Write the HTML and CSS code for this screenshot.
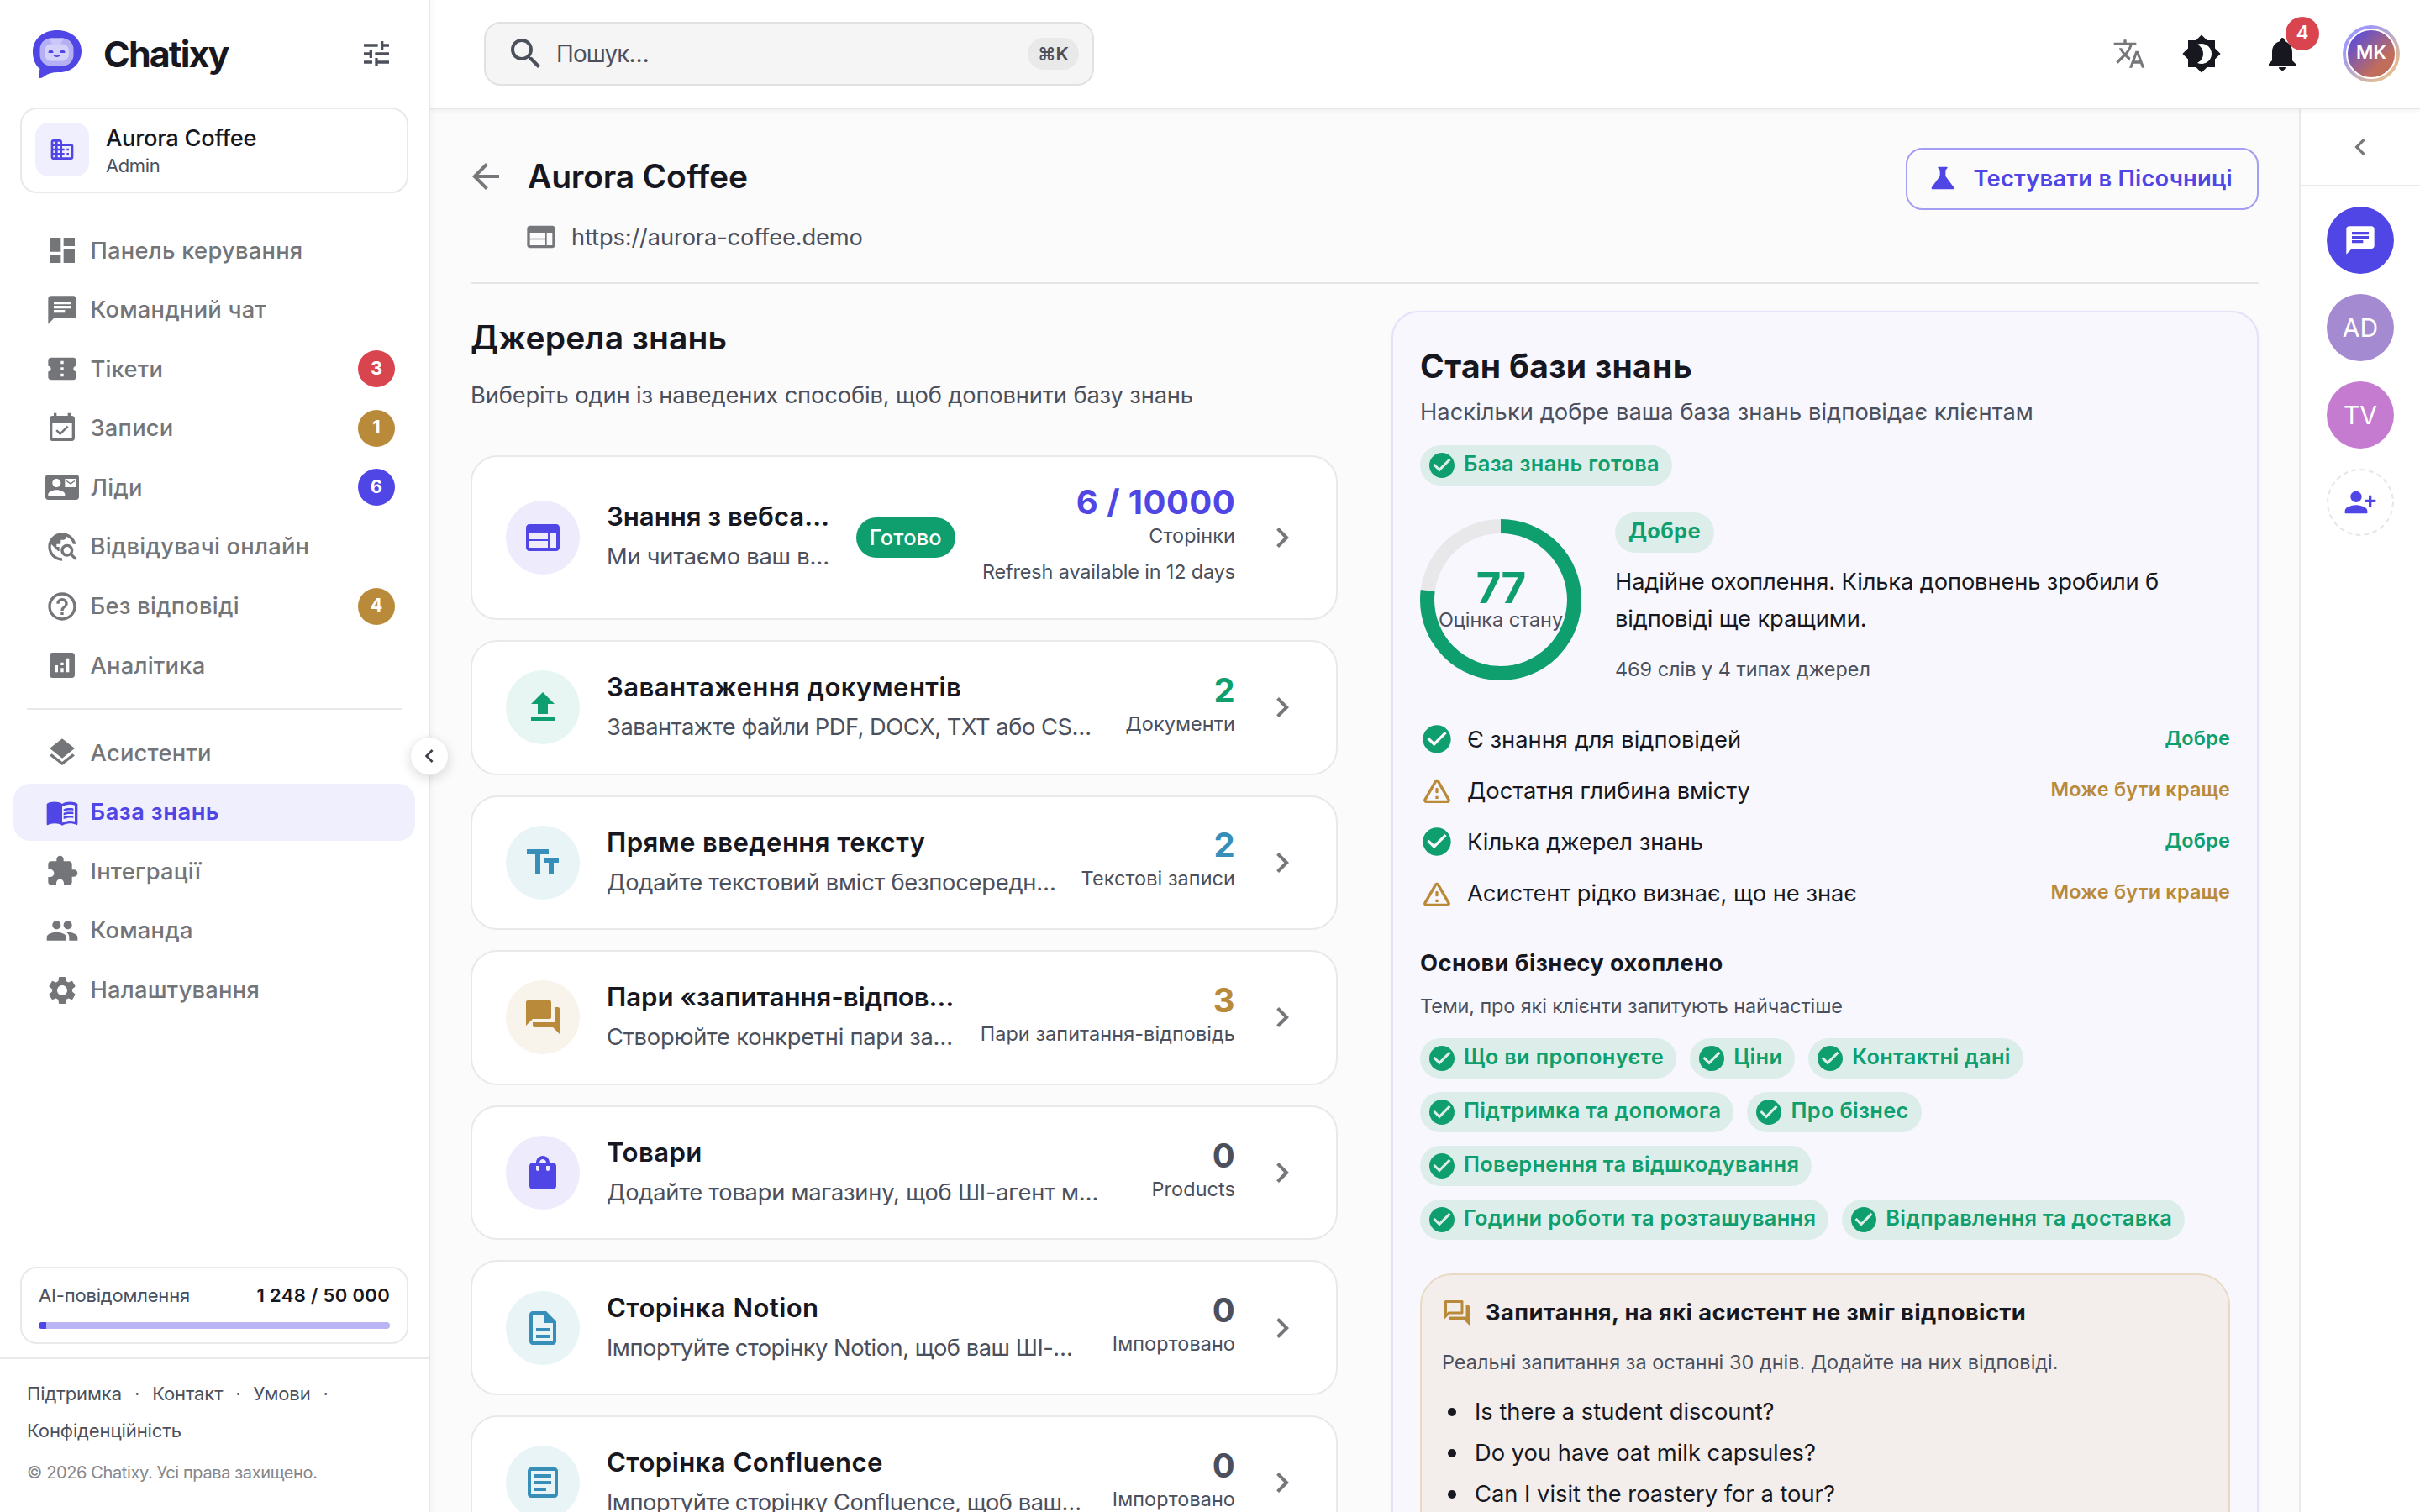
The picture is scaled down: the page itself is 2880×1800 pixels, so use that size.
FILE: index.html
```html
<!DOCTYPE html>
<html lang="uk">
<head>
    <meta charset="UTF-8">
    <title>Chatixy - База знань</title>
    <link rel="stylesheet" href="styles.css">
</head>
<body>

<!-- icon sprite -->
<svg class="sprite" xmlns="http://www.w3.org/2000/svg">
    <symbol id="i-tune" viewBox="0 0 24 24"><path d="M3 17v2h6v-2H3zM3 5v2h10V5H3zm10 16v-2h8v-2h-8v-2h-2v6h2zM7 9v2H3v2h4v2h2V9H7zm14 4v-2H11v2h10zm-6-4h2V7h4V5h-4V3h-2v6z"/></symbol>
    <symbol id="i-business" viewBox="0 0 24 24"><path d="M12 7V5c0-1.1-.9-2-2-2H4c-1.1 0-2 .9-2 2v14c0 1.1.9 2 2 2h16c1.1 0 2-.9 2-2V9c0-1.1-.9-2-2-2h-8zM6 19H4v-2h2v2zm0-4H4v-2h2v2zm0-4H4V9h2v2zm0-4H4V5h2v2zm4 12H8v-2h2v2zm0-4H8v-2h2v2zm0-4H8V9h2v2zm0-4H8V5h2v2zm10 12h-8v-2h2v-2h-2v-2h2v-2h-2V9h8v10zm-2-8h-2v2h2v-2zm0 4h-2v2h2v-2z"/></symbol>
    <symbol id="i-dashboard" viewBox="0 0 24 24"><path d="M3 13h8V3H3v10zm0 8h8v-6H3v6zm10 0h8V11h-8v10zm0-18v6h8V3h-8z"/></symbol>
    <symbol id="i-chat" viewBox="0 0 24 24"><path d="M20 2H4c-1.1 0-1.99.9-1.99 2L2 22l4-4h14c1.1 0 2-.9 2-2V4c0-1.1-.9-2-2-2zM6 9h12v2H6V9zm8 5H6v-2h8v2zm4-6H6V6h12v2z"/></symbol>
    <symbol id="i-ticket" viewBox="0 0 24 24"><path d="M22 10V6c0-1.11-.9-2-2-2H4c-1.1 0-1.99.89-1.99 2v4c1.1 0 1.99.9 1.99 2s-.89 2-2 2v4c0 1.1.9 2 2 2h16c1.1 0 2-.9 2-2v-4c-1.1 0-2-.9-2-2s.9-2 2-2zm-9 7.5h-2v-2h2v2zm0-4.5h-2v-2h2v2zm0-4.5h-2v-2h2v2z"/></symbol>
    <symbol id="i-event" viewBox="0 0 24 24"><path d="M16.53 11.06L15.47 10l-4.88 4.88-2.12-2.12-1.06 1.06L10.59 17l5.94-5.94zM19 3h-1V1h-2v2H8V1H6v2H5c-1.11 0-1.99.9-1.99 2L3 19c0 1.1.89 2 2 2h14c1.1 0 2-.9 2-2V5c0-1.1-.9-2-2-2zm0 16H5V8h14v11z"/></symbol>
    <symbol id="i-contact" viewBox="0 0 24 24"><path d="M21 8V7l-3 2-3-2v1l3 2 3-2zm1-5H2C.9 3 0 3.9 0 5v14c0 1.1.9 2 2 2h20c1.1 0 1.99-.9 1.99-2L24 5c0-1.1-.9-2-2-2zM8 6c1.66 0 3 1.34 3 3s-1.34 3-3 3-3-1.34-3-3 1.34-3 3-3zm6 12H2v-1c0-2 4-3.1 6-3.1s6 1.1 6 3.1v1zm8-6h-8V6h8v6z"/></symbol>
    <symbol id="i-explore" viewBox="0 0 24 24"><path d="M19.3 16.9c.4-.7.7-1.5.7-2.4 0-2.5-2-4.5-4.5-4.5S11 12 11 14.5s2 4.5 4.5 4.5c.9 0 1.7-.3 2.4-.7l3.2 3.2 1.4-1.4-3.2-3.2zm-3.8.1c-1.4 0-2.5-1.1-2.5-2.5s1.1-2.5 2.5-2.5 2.5 1.1 2.5 2.5-1.1 2.5-2.5 2.5zM12 20v2C6.48 22 2 17.52 2 12S6.48 2 12 2c4.84 0 8.87 3.44 9.8 8h-2.07c-.64-2.46-2.4-4.47-4.73-5.41V5c0 1.1-.9 2-2 2h-2v2c0 .55-.45 1-1 1H8v2h2v3H9l-4.79-4.79C4.08 10.79 4 11.38 4 12c0 4.41 3.59 8 8 8z"/></symbol>
    <symbol id="i-help" viewBox="0 0 24 24"><path d="M11 18h2v-2h-2v2zm1-16C6.48 2 2 6.48 2 12s4.48 10 10 10 10-4.48 10-10S17.52 2 12 2zm0 18c-4.41 0-8-3.59-8-8s3.59-8 8-8 8 3.59 8 8-3.59 8-8 8zm0-14c-2.21 0-4 1.79-4 4h2c0-1.1.9-2 2-2s2 .9 2 2c0 2-3 1.75-3 5h2c0-2.25 3-2.5 3-5 0-2.21-1.79-4-4-4z"/></symbol>
    <symbol id="i-analytics" viewBox="0 0 24 24"><path d="M19 3H5c-1.1 0-2 .9-2 2v14c0 1.1.9 2 2 2h14c1.1 0 2-.9 2-2V5c0-1.1-.9-2-2-2zM9 17H7v-5h2v5zm4 0h-2v-3h2v3zm0-5h-2v-2h2v2zm4 5h-2V7h2v10z"/></symbol>
    <symbol id="i-layers" viewBox="0 0 24 24"><path d="M11.99 18.54l-7.37-5.73L3 14.07l9 7 9-7-1.63-1.27-7.38 5.74zM12 16l7.36-5.73L21 9l-9-7-9 7 1.63 1.27L12 16z"/></symbol>
    <symbol id="i-book" viewBox="0 0 24 24"><path d="M21 5c-1.11-.35-2.33-.5-3.5-.5-1.95 0-4.05.4-5.5 1.5-1.45-1.1-3.55-1.5-5.5-1.5S2.45 4.9 1 6v14.65c0 .25.25.5.5.5.1 0 .15-.05.25-.05C3.1 20.45 5.05 20 6.5 20c1.95 0 4.05.4 5.5 1.5 1.35-.85 3.8-1.5 5.5-1.5 1.65 0 3.35.3 4.75 1.05.1.05.15.05.25.05.25 0 .5-.25.5-.5V6c-.6-.45-1.25-.75-2-1zm0 13.5c-1.1-.35-2.3-.5-3.5-.5-1.7 0-4.15.65-5.5 1.5V8c1.35-.85 3.8-1.5 5.5-1.5 1.2 0 2.4.15 3.5.5v11.5z"/><path d="M17.5 10.5c.88 0 1.73.09 2.5.26V9.24c-.79-.15-1.64-.24-2.5-.24-1.7 0-3.24.29-4.5.83v1.66c1.13-.64 2.7-.99 4.5-.99zM13 12.49v1.66c1.13-.64 2.7-.99 4.5-.99.88 0 1.73.09 2.5.26V11.9c-.79-.15-1.64-.24-2.5-.24-1.7 0-3.24.3-4.5.83zm4.5 1.84c-1.7 0-3.24.29-4.5.83v1.66c1.13-.64 2.7-.99 4.5-.99.88 0 1.73.09 2.5.26v-1.52c-.79-.16-1.64-.24-2.5-.24z"/></symbol>
    <symbol id="i-extension" viewBox="0 0 24 24"><path d="M20.5 11H19V7c0-1.1-.9-2-2-2h-4V3.5C13 2.12 11.88 1 10.5 1S8 2.12 8 3.5V5H4c-1.1 0-1.99.9-1.99 2v3.8H3.5c1.49 0 2.7 1.21 2.7 2.7s-1.21 2.7-2.7 2.7H2V20c0 1.1.9 2 2 2h3.8v-1.5c0-1.49 1.21-2.7 2.7-2.7 1.49 0 2.7 1.21 2.7 2.7V22H17c1.1 0 2-.9 2-2v-4h1.5c1.38 0 2.5-1.12 2.5-2.5S21.88 11 20.5 11z"/></symbol>
    <symbol id="i-people" viewBox="0 0 24 24"><path d="M16 11c1.66 0 2.99-1.34 2.99-3S17.66 5 16 5c-1.66 0-3 1.34-3 3s1.34 3 3 3zm-8 0c1.66 0 2.99-1.34 2.99-3S9.66 5 8 5C6.34 5 5 6.34 5 8s1.34 3 3 3zm0 2c-2.33 0-7 1.17-7 3.5V19h14v-2.5c0-2.33-4.67-3.5-7-3.5zm8 0c-.29 0-.62.02-.97.05 1.16.84 1.97 1.97 1.97 3.45V19h6v-2.5c0-2.33-4.67-3.5-7-3.5z"/></symbol>
    <symbol id="i-settings" viewBox="0 0 24 24"><path d="M19.14 12.94c.04-.3.06-.61.06-.94 0-.32-.02-.64-.07-.94l2.03-1.58c.18-.14.23-.41.12-.61l-1.92-3.32c-.12-.22-.37-.29-.59-.22l-2.39.96c-.5-.38-1.03-.7-1.62-.94l-.36-2.54c-.04-.24-.24-.41-.48-.41h-3.84c-.24 0-.43.17-.47.41l-.36 2.54c-.59.24-1.13.57-1.62.94l-2.39-.96c-.22-.08-.47 0-.59.22L2.74 8.87c-.12.21-.08.47.12.61l2.03 1.58c-.05.3-.09.63-.09.94s.02.64.07.94l-2.03 1.58c-.18.14-.23.41-.12.61l1.92 3.32c.12.22.37.29.59.22l2.39-.96c.5.38 1.03.7 1.62.94l.36 2.54c.05.24.24.41.48.41h3.84c.24 0 .44-.17.47-.41l.36-2.54c.59-.24 1.13-.56 1.62-.94l2.39.96c.22.08.47 0 .59-.22l1.92-3.32c.12-.22.07-.47-.12-.61l-2.01-1.58zM12 15.6c-1.98 0-3.6-1.62-3.6-3.6s1.62-3.6 3.6-3.6 3.6 1.62 3.6 3.6-1.62 3.6-3.6 3.6z"/></symbol>
    <symbol id="i-left" viewBox="0 0 24 24"><path d="M15.41 7.41L14 6l-6 6 6 6 1.41-1.41L10.83 12z"/></symbol>
    <symbol id="i-right" viewBox="0 0 24 24"><path d="M10 6L8.59 7.41 13.17 12l-4.58 4.59L10 18l6-6z"/></symbol>
    <symbol id="i-search" viewBox="0 0 24 24"><path d="M15.5 14h-.79l-.28-.27C15.41 12.59 16 11.11 16 9.5 16 5.91 13.09 3 9.5 3S3 5.91 3 9.5 5.91 16 9.5 16c1.61 0 3.09-.59 4.23-1.57l.27.28v.79l5 4.99L20.49 19l-4.99-5zm-6 0C7.01 14 5 11.99 5 9.5S7.01 5 9.5 5 14 7.01 14 9.5 11.99 14 9.5 14z"/></symbol>
    <symbol id="i-translate" viewBox="0 0 24 24"><path d="M12.87 15.07l-2.54-2.51.03-.03c1.74-1.94 2.98-4.17 3.71-6.53H17V4h-7V2H8v2H1v1.99h11.17C11.5 7.92 10.44 9.75 9 11.35 8.07 10.32 7.3 9.19 6.69 8h-2c.73 1.63 1.73 3.17 2.98 4.56l-5.09 5.02L4 19l5-5 3.11 3.11.76-2.04zM18.5 10h-2L12 22h2l1.12-3h4.75L21 22h2l-4.5-12zm-2.62 7l1.62-4.33L19.12 17h-3.24z"/></symbol>
    <symbol id="i-brightness" viewBox="0 0 24 24"><path d="M20 8.69V4h-4.69L12 .69 8.69 4H4v4.69L.69 12 4 15.31V20h4.69L12 23.31 15.31 20H20v-4.69L23.31 12 20 8.69zM12 18c-.89 0-1.74-.2-2.5-.55C11.56 16.5 13 14.42 13 12s-1.44-4.5-3.5-5.45C10.26 6.2 11.11 6 12 6c3.31 0 6 2.69 6 6s-2.69 6-6 6z"/></symbol>
    <symbol id="i-bell" viewBox="0 0 24 24"><path d="M12 22c1.1 0 2-.9 2-2h-4c0 1.1.89 2 2 2zm6-6v-5c0-3.07-1.64-5.64-4.5-6.32V4c0-.83-.67-1.5-1.5-1.5s-1.5.67-1.5 1.5v.68C7.63 5.36 6 7.92 6 11v5l-2 2v1h16v-1l-2-2z"/></symbol>
    <symbol id="i-back" viewBox="0 0 24 24"><path d="M20 11H7.83l5.59-5.59L12 4l-8 8 8 8 1.41-1.41L7.83 13H20v-2z"/></symbol>
    <symbol id="i-web" viewBox="0 0 24 24"><path d="M20 4H4c-1.1 0-1.99.9-1.99 2L2 18c0 1.1.9 2 2 2h16c1.1 0 2-.9 2-2V6c0-1.1-.9-2-2-2zm-5 14H4v-4h11v4zm0-5H4V9h11v4zm5 5h-4V9h4v9z"/></symbol>
    <symbol id="i-science" viewBox="0 0 24 24"><path d="M19.8 18.4L14 10.67V6.5l1.35-1.69c.26-.33.03-.81-.39-.81H9.04c-.42 0-.65.48-.39.81L10 6.5v4.17L4.2 18.4c-.49.66-.02 1.6.8 1.6h14c.82 0 1.29-.94.8-1.6z"/></symbol>
    <symbol id="i-upload" viewBox="0 0 24 24"><path d="M5 20h14v-2H5v2zm0-10h4v6h6v-6h4l-7-7-7 7z"/></symbol>
    <symbol id="i-text" viewBox="0 0 24 24"><path d="M2.5 4v3h5v12h3V7h5V4h-13zm19 5h-9v3h3v7h3v-7h3V9z"/></symbol>
    <symbol id="i-forum" viewBox="0 0 24 24"><path d="M21 6h-2v9H6v2c0 .55.45 1 1 1h11l4 4V7c0-.55-.45-1-1-1zm-4 6V3c0-.55-.45-1-1-1H3c-.55 0-1 .45-1 1v14l4-4h10c.55 0 1-.45 1-1z"/></symbol>
    <symbol id="i-forum-outline" viewBox="0 0 24 24"><path d="M15 4v7H5.17L4 12.17V4h11m1-2H3c-.55 0-1 .45-1 1v14l4-4h10c.55 0 1-.45 1-1V3c0-.55-.45-1-1-1zm5 4h-2v9H6v2c0 .55.45 1 1 1h11l4 4V7c0-.55-.45-1-1-1z"/></symbol>
    <symbol id="i-bag" viewBox="0 0 24 24"><path d="M18 6h-2c0-2.21-1.79-4-4-4S8 3.79 8 6H6c-1.1 0-2 .9-2 2v12c0 1.1.9 2 2 2h12c1.1 0 2-.9 2-2V8c0-1.1-.9-2-2-2zm-8 4c0 .55-.45 1-1 1s-1-.45-1-1V8h2v2zm2-6c1.1 0 2 .9 2 2h-4c0-1.1.9-2 2-2zm4 6c0 .55-.45 1-1 1s-1-.45-1-1V8h2v2z"/></symbol>
    <symbol id="i-doc" viewBox="0 0 24 24"><path d="M8 16h8v2H8zm0-4h8v2H8zm6-10H6c-1.1 0-2 .9-2 2v16c0 1.1.89 2 1.99 2H18c1.1 0 2-.9 2-2V8l-6-6zm4 18H6V4h7v5h5v11z"/></symbol>
    <symbol id="i-article" viewBox="0 0 24 24"><path d="M19 5v14H5V5h14m0-2H5c-1.1 0-2 .9-2 2v14c0 1.1.9 2 2 2h14c1.1 0 2-.9 2-2V5c0-1.1-.9-2-2-2z"/><path d="M14 17H7v-2h7v2zm3-4H7v-2h10v2zm0-4H7V7h10v2z"/></symbol>
    <symbol id="i-check" viewBox="0 0 24 24"><path d="M12 2C6.48 2 2 6.48 2 12s4.48 10 10 10 10-4.48 10-10S17.52 2 12 2zm-2 15l-5-5 1.41-1.41L10 14.17l7.59-7.59L19 8l-9 9z"/></symbol>
    <symbol id="i-warning" viewBox="0 0 24 24"><path d="M12 5.99L19.53 19H4.47L12 5.99M2.74 18c-.77 1.33.19 3 1.73 3h15.06c1.54 0 2.5-1.67 1.73-3L13.73 4.99c-.77-1.33-2.69-1.33-3.46 0L2.74 18zM11 11v2c0 .55.45 1 1 1s1-.45 1-1v-2c0-.55-.45-1-1-1s-1 .45-1 1zm0 5h2v2h-2z"/></symbol>
    <symbol id="i-person-add" viewBox="0 0 24 24"><path d="M13 8c0-2.21-1.79-4-4-4S5 5.79 5 8s1.79 4 4 4 4-1.79 4-4zm2 2v2h3v3h2v-3h3v-2h-3V7h-2v3h-3zM1 18v2h16v-2c0-2.66-5.33-4-8-4s-8 1.34-8 4z"/></symbol>
</svg>

<div class="app">
    <aside class="sidebar">
        <div class="brand">
            <svg class="logo" viewBox="0 0 64 64">
                <path fill="#4f46e5" d="M33 4C49 4 62 14 62 28.500C62 44 50 54 36 54C30 54 24 54.500 19 58C16 60 14 61.500 12.500 61C10 60 10.800 57 12.500 50C7 46 4 38 4 29.500C4 14 17 4 33 4z"/>
                <rect fill="#b5b0f4" x="12.500" y="13.500" width="40" height="33" rx="13"/>
                <path fill="#cbc7f8" d="M24 13.500h17l-4 7H27z"/>
                <rect fill="#d5d2fa" x="18" y="20.500" width="29" height="20" rx="8"/>
                <path fill="#4f46e5" d="M22.500 31a3 3.500 0 0 1 6 0zM36.500 31a3 3.500 0 0 1 6 0z"/>
                <path fill="none" stroke="#4f46e5" stroke-width="1.600" stroke-linecap="round" d="M29.500 34q3 2.200 6 0"/>
            </svg>
            <span class="brand-name">Chatixy</span>
            <svg class="icon icon-40"><use href="#i-tune"/></svg>
        </div>

        <div class="org">
            <div class="org-icon"><svg class="icon icon-32"><use href="#i-business"/></svg></div>
            <div>
                <div class="org-name">Aurora Coffee</div>
                <div class="org-role">Admin</div>
            </div>
        </div>

        <nav class="nav">
            <a class="nav-item"><svg class="icon icon-40"><use href="#i-dashboard"/></svg><span>Панель керування</span></a>
            <a class="nav-item"><svg class="icon icon-40"><use href="#i-chat"/></svg><span>Командний чат</span></a>
            <a class="nav-item"><svg class="icon icon-40"><use href="#i-ticket"/></svg><span>Тікети</span><b class="badge red">3</b></a>
            <a class="nav-item"><svg class="icon icon-40"><use href="#i-event"/></svg><span>Записи</span><b class="badge amber">1</b></a>
            <a class="nav-item"><svg class="icon icon-40"><use href="#i-contact"/></svg><span>Ліди</span><b class="badge violet">6</b></a>
            <a class="nav-item"><svg class="icon icon-40"><use href="#i-explore"/></svg><span>Відвідувачі онлайн</span></a>
            <a class="nav-item"><svg class="icon icon-40"><use href="#i-help"/></svg><span>Без відповіді</span><b class="badge amber">4</b></a>
            <a class="nav-item"><svg class="icon icon-40"><use href="#i-analytics"/></svg><span>Аналітика</span></a>
            <hr class="nav-line">
            <a class="nav-item"><svg class="icon icon-40"><use href="#i-layers"/></svg><span>Асистенти</span></a>
            <a class="nav-item active"><svg class="icon icon-40"><use href="#i-book"/></svg><span>База знань</span></a>
            <a class="nav-item"><svg class="icon icon-40"><use href="#i-extension"/></svg><span>Інтеграції</span></a>
            <a class="nav-item"><svg class="icon icon-40"><use href="#i-people"/></svg><span>Команда</span></a>
            <a class="nav-item"><svg class="icon icon-40"><use href="#i-settings"/></svg><span>Налаштування</span></a>
        </nav>

        <div class="usage">
            <div class="usage-row"><span>AI-повідомлення</span><b>1 248 / 50 000</b></div>
            <div class="bar"><div class="bar-fill" style="width: 2.1%"></div></div>
        </div>

        <footer class="footer">
            <div class="links">
                <a>Підтримка</a><i>·</i><a>Контакт</a><i>·</i><a>Умови</a><i>·</i><a>Конфіденційність</a>
            </div>
            <div class="copy">© 2026 Chatixy. Усі права захищено.</div>
        </footer>

        <button class="collapse"><svg class="icon icon-32"><use href="#i-left"/></svg></button>
    </aside>

    <div class="main">
        <header class="topbar">
            <div class="search">
                <svg class="icon icon-48"><use href="#i-search"/></svg>
                <span class="search-text">Пошук…</span>
                <span class="kbd">⌘K</span>
            </div>
            <div class="tools">
                <svg class="icon icon-40 muted"><use href="#i-translate"/></svg>
                <svg class="icon icon-48"><use href="#i-brightness"/></svg>
                <div class="bell">
                    <svg class="icon icon-48"><use href="#i-bell"/></svg>
                    <b class="bell-count">4</b>
                </div>
                <div class="avatar"><span>MK</span></div>
            </div>
        </header>

        <div class="body">
            <main class="content">
                <div class="page-head">
                    <div class="page-info">
                        <div class="page-title"><svg class="icon icon-48 muted"><use href="#i-back"/></svg><h1>Aurora Coffee</h1></div>
                        <div class="page-url"><svg class="icon icon-40 muted"><use href="#i-web"/></svg><span>https://aurora-coffee.demo</span></div>
                    </div>
                    <button class="sandbox"><svg class="icon icon-40"><use href="#i-science"/></svg><span>Тестувати в Пісочниці</span></button>
                </div>

                <div class="columns">
                    <section class="sources">
                        <h2>Джерела знань</h2>
                        <p class="lead">Виберіть один із наведених способів, щоб доповнити базу знань</p>

                        <div class="cards">
                            <div class="card tall">
                                <div class="card-icon violet"><svg class="icon icon-48"><use href="#i-web"/></svg></div>
                                <div class="card-text"><h3 class="tight">Знання з вебса…</h3><p>Ми читаємо ваш в…</p></div>
                                <span class="ready">Готово</span>
                                <div class="card-count violet"><b>6 / 10000</b><span>Сторінки</span><span class="refresh">Refresh available in 12 days</span></div>
                                <svg class="icon icon-48 muted"><use href="#i-right"/></svg>
                            </div>
                            <div class="card">
                                <div class="card-icon green"><svg class="icon icon-48"><use href="#i-upload"/></svg></div>
                                <div class="card-text"><h3>Завантаження документів</h3><p class="tight">Завантажте файли PDF, DOCX, TXT або CS…</p></div>
                                <div class="card-count green"><b>2</b><span>Документи</span></div>
                                <svg class="icon icon-48 muted"><use href="#i-right"/></svg>
                            </div>
                            <div class="card">
                                <div class="card-icon blue"><svg class="icon icon-48"><use href="#i-text"/></svg></div>
                                <div class="card-text"><h3>Пряме введення тексту</h3><p>Додайте текстовий вміст безпосередн…</p></div>
                                <div class="card-count blue"><b>2</b><span>Текстові записи</span></div>
                                <svg class="icon icon-48 muted"><use href="#i-right"/></svg>
                            </div>
                            <div class="card">
                                <div class="card-icon amber"><svg class="icon icon-48"><use href="#i-forum"/></svg></div>
                                <div class="card-text"><h3 class="tight">Пари «запитання-відпов…</h3><p>Створюйте конкретні пари за…</p></div>
                                <div class="card-count amber"><b>3</b><span>Пари запитання-відповідь</span></div>
                                <svg class="icon icon-48 muted"><use href="#i-right"/></svg>
                            </div>
                            <div class="card">
                                <div class="card-icon violet"><svg class="icon icon-48"><use href="#i-bag"/></svg></div>
                                <div class="card-text"><h3>Товари</h3><p>Додайте товари магазину, щоб ШІ-агент м…</p></div>
                                <div class="card-count"><b>0</b><span>Products</span></div>
                                <svg class="icon icon-48 muted"><use href="#i-right"/></svg>
                            </div>
                            <div class="card">
                                <div class="card-icon blue"><svg class="icon icon-48"><use href="#i-doc"/></svg></div>
                                <div class="card-text"><h3>Сторінка Notion</h3><p class="tight">Імпортуйте сторінку Notion, щоб ваш ШІ-…</p></div>
                                <div class="card-count"><b>0</b><span>Імпортовано</span></div>
                                <svg class="icon icon-48 muted"><use href="#i-right"/></svg>
                            </div>
                            <div class="card">
                                <div class="card-icon blue"><svg class="icon icon-48"><use href="#i-article"/></svg></div>
                                <div class="card-text"><h3>Сторінка Confluence</h3><p class="tight">Імпортуйте сторінку Confluence, щоб ваш…</p></div>
                                <div class="card-count"><b>0</b><span>Імпортовано</span></div>
                                <svg class="icon icon-48 muted"><use href="#i-right"/></svg>
                            </div>
                        </div>
                    </section>

                    <section class="health">
                        <h2>Стан бази знань</h2>
                        <p class="health-sub">Наскільки добре ваша база знань відповідає клієнтам</p>
                        <span class="chip"><svg class="icon icon-36"><use href="#i-check"/></svg><span>База знань готова</span></span>

                        <div class="score">
                            <div class="gauge">
                                <svg viewBox="0 0 192 192">
                                    <circle class="gauge-track" cx="96" cy="96" r="87.500"/>
                                    <circle class="gauge-value" cx="96" cy="96" r="87.500" pathLength="100" stroke-dasharray="77 100" transform="rotate(-90 96 96)"/>
                                </svg>
                                <div class="gauge-text"><b>77</b><span>Оцінка стану</span></div>
                            </div>
                            <div class="score-info">
                                <span class="chip plain"><span>Добре</span></span>
                                <p>Надійне охоплення. Кілька доповнень зробили б відповіді ще кращими.</p>
                                <small>469 слів у 4 типах джерел</small>
                            </div>
                        </div>

                        <div class="checks">
                            <div class="check ok"><svg class="icon icon-40"><use href="#i-check"/></svg><span>Є знання для відповідей</span><b>Добре</b></div>
                            <div class="check warn"><svg class="icon icon-40"><use href="#i-warning"/></svg><span>Достатня глибина вмісту</span><b>Може бути краще</b></div>
                            <div class="check ok"><svg class="icon icon-40"><use href="#i-check"/></svg><span>Кілька джерел знань</span><b>Добре</b></div>
                            <div class="check warn"><svg class="icon icon-40"><use href="#i-warning"/></svg><span>Асистент рідко визнає, що не знає</span><b>Може бути краще</b></div>
                        </div>

                        <h4>Основи бізнесу охоплено</h4>
                        <p class="topics-sub">Теми, про які клієнти запитують найчастіше</p>
                        <div class="chips">
                            <span class="chip"><svg class="icon icon-36"><use href="#i-check"/></svg><span>Що ви пропонуєте</span></span>
                            <span class="chip"><svg class="icon icon-36"><use href="#i-check"/></svg><span>Ціни</span></span>
                            <span class="chip"><svg class="icon icon-36"><use href="#i-check"/></svg><span>Контактні дані</span></span>
                            <span class="chip"><svg class="icon icon-36"><use href="#i-check"/></svg><span>Підтримка та допомога</span></span>
                            <span class="chip"><svg class="icon icon-36"><use href="#i-check"/></svg><span>Про бізнес</span></span>
                            <span class="chip"><svg class="icon icon-36"><use href="#i-check"/></svg><span>Повернення та відшкодування</span></span>
                            <span class="chip"><svg class="icon icon-36"><use href="#i-check"/></svg><span>Години роботи та розташування</span></span>
                            <span class="chip"><svg class="icon icon-36"><use href="#i-check"/></svg><span>Відправлення та доставка</span></span>
                        </div>

                        <div class="missed">
                            <div class="missed-title"><svg class="icon icon-36"><use href="#i-forum-outline"/></svg><h4>Запитання, на які асистент не зміг відповісти</h4></div>
                            <p>Реальні запитання за останні 30 днів. Додайте на них відповіді.</p>
                            <ul>
                                <li>Is there a student discount?</li>
                                <li>Do you have oat milk capsules?</li>
                                <li>Can I visit the roastery for a tour?</li>
                            </ul>
                        </div>
                    </section>
                </div>
            </main>

            <aside class="rail">
                <div class="rail-head"><svg class="icon icon-40 muted"><use href="#i-left"/></svg></div>
                <div class="rail-list">
                    <div class="contact chat"><svg class="icon icon-40"><use href="#i-chat"/></svg></div>
                    <div class="contact ad">AD</div>
                    <div class="contact tv">TV</div>
                    <div class="contact add"><svg class="icon icon-40"><use href="#i-person-add"/></svg></div>
                </div>
            </aside>
        </div>
    </div>
</div>
</body>
</html>
```
FILE: styles.css
```css
* {
    box-sizing: border-box;
}
body {
    margin: 0;
    width: 2880px;
    height: 1800px;
    overflow: hidden;
    background: #fbfbfb;
    font-family: Inter, "Liberation Sans", sans-serif;
    font-size: 27.3px;
    color: #17181f;
}
h1, h2, h3, h4, p, ul {
    margin: 0;
    padding: 0;
}
button {
    font: inherit;
    padding: 0;
}
.sprite {
    display: none;
}
.icon {
    display: block;
    flex: none;
    fill: currentColor;
}
.icon-32 { width: 32px; height: 32px; }
.icon-36 { width: 36px; height: 36px; }
.icon-40 { width: 40px; height: 40px; }
.icon-48 { width: 48px; height: 48px; }
.muted {
    color: #75777b;
}
.app {
    display: flex;
    height: 1800px;
}

/* sidebar */
.sidebar {
    position: relative;
    z-index: 2;
    display: flex;
    flex-direction: column;
    flex: none;
    width: 512px;
    background: #fff;
    border-right: 2px solid #e8e8e9;
    box-shadow: 2px 0 6px rgba(0, 0, 0, 0.04);
}
.brand {
    display: flex;
    align-items: center;
    height: 128px;
    padding: 0 42px 0 35px;
    color: #4b505c;
}
.logo {
    width: 64px;
    height: 64px;
}
.brand-name {
    flex: 1;
    margin-left: 24px;
    font-size: 43px;
    font-weight: 650;
    letter-spacing: -1.9px;
    color: #17181f;
}
.org {
    display: flex;
    align-items: center;
    gap: 20px;
    height: 102px;
    margin: 0 24px 34px;
    padding: 0 16px 2px;
    border: 2px solid #e9e9ea;
    border-radius: 20px;
}
.org-icon {
    display: flex;
    align-items: center;
    justify-content: center;
    width: 64px;
    height: 64px;
    border-radius: 16px;
    background: #f0effd;
    color: #4f46e5;
}
.org-name {
    padding-top: 2px;
    font-weight: 500;
    line-height: 36px;
    letter-spacing: -0.28px;
}
.org-role {
    font-size: 22px;
    line-height: 28px;
    letter-spacing: -0.4px;
    color: #4b505c;
}
.nav-item {
    display: flex;
    align-items: center;
    gap: 13.5px;
    height: 68px;
    margin: 0 16px 2.6px;
    padding: 0 24px 0 38px;
    border-radius: 20px;
    font-weight: 500;
    letter-spacing: 0.25px;
    color: #737579;
}
.nav-item span {
    flex: 1;
}
.nav-item.active {
    background: #f0effd;
    color: #4f46e5;
    font-weight: 600;
    letter-spacing: 0.5px;
}
.badge {
    display: flex;
    align-items: center;
    justify-content: center;
    width: 44px;
    height: 44px;
    padding-bottom: 3px;
    border-radius: 50%;
    font-size: 22px;
    font-weight: 700;
    letter-spacing: 0;
    color: #fff;
}
.badge.red { background: #d8454f; }
.badge.amber { background: #b98a3a; }
.badge.violet { background: #4f46e5; }
.nav-line {
    height: 2px;
    margin: 17px 32px;
    border: 0;
    background: #e9e9ea;
}
.usage {
    height: 92px;
    margin: auto 24px 16px;
    padding: 16px 20px 0;
    border: 2px solid #e9e9ea;
    border-radius: 20px;
}
.usage-row {
    display: flex;
    justify-content: space-between;
    font-size: 22px;
    line-height: 32px;
    letter-spacing: -0.18px;
    color: #4b505c;
}
.usage-row b {
    font-weight: 600;
    letter-spacing: 0.33px;
    color: #17181f;
}
.bar {
    height: 8px;
    margin-top: 16px;
    border-radius: 4px;
    background: #b9b5f5;
    overflow: hidden;
}
.bar-fill {
    height: 8px;
    background: #4f46e5;
}
.footer {
    height: 184px;
    padding: 19px 32px 0;
    border-top: 2px solid #e9e9ea;
}
.links {
    display: flex;
    flex-wrap: wrap;
    column-gap: 15px;
    font-size: 22px;
    line-height: 44px;
    letter-spacing: -0.1px;
    color: #4b505c;
}
.links i {
    font-style: normal;
}
.copy {
    margin-top: 12px;
    font-size: 20px;
    line-height: 33px;
    letter-spacing: -0.38px;
    color: #85878c;
}
.collapse {
    position: absolute;
    top: 877px;
    right: -24px;
    display: flex;
    align-items: center;
    justify-content: center;
    width: 46px;
    height: 46px;
    border: 1px solid #ececed;
    border-radius: 50%;
    background: #fff;
    color: #3d404a;
    box-shadow: 0 4px 14px rgba(0, 0, 0, 0.14);
}

/* top bar */
.main {
    display: flex;
    flex-direction: column;
    flex: 1;
    min-width: 0;
}
.topbar {
    position: relative;
    z-index: 1;
    display: flex;
    align-items: center;
    justify-content: space-between;
    flex: none;
    height: 130px;
    padding: 0 24px 0 64px;
    background: #fff;
    border-bottom: 2px solid #e6e6e7;
    box-shadow: 0 2px 6px rgba(0, 0, 0, 0.05);
}
.search {
    display: flex;
    align-items: center;
    width: 726px;
    height: 76px;
    padding: 0 16px 0 24px;
    border: 2px solid #e1e1e2;
    border-radius: 20px;
    background: #f5f5f5;
    color: #4b505c;
}
.search-text {
    flex: 1;
    margin-left: 12px;
    font-size: 28px;
    letter-spacing: -0.9px;
}
.kbd {
    padding: 0 12px;
    border-radius: 20px;
    background: #e9e9e9;
    font-size: 22px;
    font-weight: 600;
    line-height: 38px;
}
.tools {
    display: flex;
    align-items: center;
    gap: 48px;
}
.tools > .icon-40 {
    margin-right: -6px;
}
.bell {
    position: relative;
}
.bell-count {
    position: absolute;
    top: -20px;
    right: -20px;
    width: 40px;
    height: 40px;
    border-radius: 50%;
    background: #d8454f;
    color: #fff;
    font-size: 23px;
    font-weight: 500;
    line-height: 39px;
    text-align: center;
}
.avatar {
    width: 68px;
    height: 68px;
    padding: 4px;
    border-radius: 50%;
    background: linear-gradient(135deg, #a09af6 25%, #e0bb94 80%);
}
.avatar span {
    display: block;
    width: 60px;
    height: 60px;
    border: 2px solid #fff;
    border-radius: 50%;
    background: linear-gradient(135deg, #5a4ddc 10%, #c06d5c 70%);
    color: #fff;
    font-size: 22px;
    font-weight: 600;
    line-height: 53px;
    text-align: center;
}

/* page */
.body {
    display: flex;
    flex: 1;
    min-height: 0;
}
.content {
    flex: 1;
    padding: 46px 48px 0;
    overflow: hidden;
}
.page-head {
    display: flex;
    justify-content: space-between;
    align-items: flex-start;
    height: 162px;
    border-bottom: 2px solid #e6e6e7;
}
.page-info {
    padding-top: 6px;
}
.page-title {
    display: flex;
    align-items: center;
    gap: 26px;
    height: 56px;
    margin-left: -6px;
}
h1, h2 {
    font-size: 39px;
    font-weight: 600;
    line-height: 56px;
    letter-spacing: 0.1px;
}
h1 {
    letter-spacing: -0.2px;
}
.page-url {
    display: flex;
    align-items: center;
    gap: 16px;
    height: 40px;
    margin-top: 24px;
    padding-left: 64px;
    letter-spacing: -0.15px;
    color: #4b505c;
}
.sandbox {
    display: flex;
    align-items: center;
    gap: 16px;
    height: 74px;
    padding: 0 29px 2px 22px;
    border: 2px solid #a39df3;
    border-radius: 20px;
    background: transparent;
    color: #4f46e5;
    font-weight: 600;
    letter-spacing: 0.24px;
}
.columns {
    display: grid;
    grid-template-columns: repeat(2, minmax(0, 1fr));
    align-items: start;
    gap: 64px;
    padding-top: 32px;
}
.sources {
    padding-top: 4px;
}
.lead {
    margin: 21px 0 51px;
    line-height: 40px;
    letter-spacing: -0.14px;
    color: #4b505c;
}
.cards {
    display: flex;
    flex-direction: column;
    gap: 24px;
}
.card {
    display: flex;
    align-items: center;
    gap: 32px;
    height: 160.6px;
    padding: 0 40px;
    border: 2px solid #e9e9ea;
    border-radius: 32px;
    background: #fff;
}
.card.tall {
    height: 196px;
}
.card-icon {
    display: flex;
    align-items: center;
    justify-content: center;
    flex: none;
    width: 88px;
    height: 88px;
    border-radius: 50%;
}
.card-icon.violet { background: #edebfc; color: #4f46e5; }
.card-icon.green { background: #e7f5f3; color: #0f9f6e; }
.card-icon.blue { background: #e9f4f6; color: #378fb9; }
.card-icon.amber { background: #f8f3eb; color: #b98a3a; }
.card-text {
    flex: 1;
    min-width: 0;
    white-space: nowrap;
}
.card h3 {
    font-size: 31.2px;
    font-weight: 600;
    line-height: 47px;
    letter-spacing: 0.38px;
}
.card h3.tight {
    letter-spacing: -0.06px;
}
.card p {
    line-height: 47px;
    letter-spacing: -0.24px;
    color: #4b505c;
}
.card p.tight {
    letter-spacing: -0.47px;
}
.card.tall .card-text {
    padding-bottom: 2px;
}
.ready {
    height: 48px;
    padding: 0 16px;
    border-radius: 24px;
    background: #0f9f6e;
    color: #fff;
    font-size: 25.4px;
    font-weight: 500;
    line-height: 47px;
    letter-spacing: 0.2px;
}
.card-count {
    display: flex;
    flex-direction: column;
    align-items: flex-end;
    font-size: 23.4px;
    line-height: 42px;
    letter-spacing: 0.1px;
    color: #4b505c;
    white-space: nowrap;
}
.card-count b {
    font-size: 40px;
    font-weight: 650;
    line-height: 39px;
    letter-spacing: 0.4px;
}
.card-count.violet b { color: #4f46e5; }
.card-count.green b { color: #0f9f6e; }
.card-count.blue b { color: #378fb9; }
.card-count.amber b { color: #b98a3a; }
.refresh {
    line-height: 44px;
    letter-spacing: -0.12px;
}

/* knowledge health */
.health {
    height: 1600px;
    padding: 36px 32px;
    border: 2px solid #e4e1fa;
    border-radius: 32px;
    background: #f8f7fd;
    box-shadow: 0 2px 6px rgba(0, 0, 0, 0.04);
}
.health h2 {
    font-weight: 700;
    letter-spacing: 0.33px;
}
.health-sub {
    margin: 5px 0 17px;
    line-height: 44px;
    letter-spacing: 0.05px;
    color: #4b505c;
}
.chip {
    display: inline-flex;
    align-items: center;
    gap: 8px;
    height: 48px;
    padding: 0 15px 0 8px;
    border-radius: 24px;
    background: #ddeeea;
    color: #0f9f6e;
    font-size: 25.4px;
    font-weight: 600;
    letter-spacing: 0.32px;
    vertical-align: top;
}
.chip span {
    padding-bottom: 5px;
}
.chip.plain {
    padding: 0 16px;
    font-weight: 700;
}
.score {
    display: flex;
    align-items: center;
    gap: 40px;
    margin-top: 32px;
}
.gauge {
    display: grid;
    flex: none;
    width: 192px;
    height: 192px;
}
.gauge svg, .gauge-text {
    grid-area: 1 / 1;
}
.gauge circle {
    fill: none;
    stroke-width: 17;
}
.gauge-track { stroke: #e8e8ea; }
.gauge-value { stroke: #0f9f6e; }
.gauge-text {
    display: flex;
    flex-direction: column;
    align-items: center;
    justify-content: center;
    padding-bottom: 1px;
    font-size: 23.4px;
    line-height: 26px;
    white-space: nowrap;
    color: #4b505c;
}
.gauge-text b {
    font-size: 51px;
    line-height: 50px;
    letter-spacing: -1px;
    color: #0f9f6e;
}
.score-info p {
    margin-top: 13px;
    line-height: 44px;
    letter-spacing: -0.14px;
}
.score-info small {
    display: block;
    margin-top: 18px;
    font-size: 23.4px;
    line-height: 40px;
    color: #4b505c;
}
.checks {
    display: flex;
    flex-direction: column;
    gap: 17.2px;
    margin: 41px 0 39px;
}
.check {
    display: flex;
    align-items: center;
    gap: 16px;
    height: 44px;
}
.check span {
    flex: 1;
    letter-spacing: 0;
}
.check b {
    padding-bottom: 4px;
    font-size: 23.4px;
    font-weight: 600;
    letter-spacing: 0.22px;
}
.check.ok .icon, .check.ok b { color: #0f9f6e; }
.check.warn .icon, .check.warn b { color: #b98a3a; }
h4 {
    font-size: 27.3px;
    font-weight: 700;
    line-height: 44px;
    letter-spacing: 0.4px;
}
.topics-sub {
    margin: 11px 0 20.5px;
    font-size: 23.4px;
    line-height: 36px;
    letter-spacing: -0.1px;
    color: #4b505c;
}
.chips {
    display: flex;
    flex-wrap: wrap;
    gap: 16px;
}
.missed {
    height: 400px;
    margin-top: 40px;
    padding: 23px 24px;
    border: 2px solid #e8d9c4;
    border-radius: 38px;
    background: #f3eeec;
}
.missed-title {
    display: flex;
    align-items: center;
    gap: 16px;
}
.missed-title .icon {
    color: #b98a3a;
}
.missed p {
    margin: 19px 0 16px;
    font-size: 23.4px;
    line-height: 36px;
    letter-spacing: 0.05px;
    color: #4b505c;
}
.missed ul {
    list-style: none;
}
.missed li {
    display: flex;
    align-items: center;
    gap: 22px;
    padding-left: 7px;
    line-height: 49px;
}
.missed li::before {
    content: "";
    width: 10px;
    height: 10px;
    border-radius: 50%;
    background: #17181f;
}

/* right rail */
.rail {
    flex: none;
    width: 144px;
    border-left: 2px solid #e9e9ea;
    background: #fff;
}
.rail-head {
    display: flex;
    align-items: center;
    justify-content: center;
    height: 92px;
    border-bottom: 2px solid #e9e9ea;
}
.rail-list {
    display: flex;
    flex-direction: column;
    align-items: center;
    gap: 24px;
    padding: 24px 0;
}
.contact {
    display: flex;
    align-items: center;
    justify-content: center;
    width: 80px;
    height: 80px;
    border-radius: 50%;
    color: #fff;
    font-size: 30px;
}
.contact.chat { background: #4f46e5; }
.contact.ad { background: #a48ad0; }
.contact.tv { background: #c47bd0; }
.contact.add {
    border: 2px dashed #e6e6e7;
    color: #4f46e5;
}
```
